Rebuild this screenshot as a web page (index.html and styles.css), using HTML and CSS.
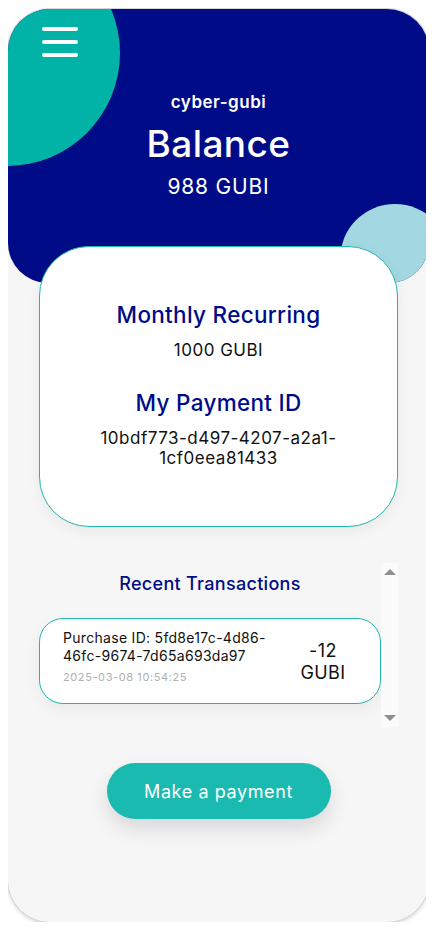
FILE: index.html
```html
<!DOCTYPE html>
<html>
<head>
<meta charset="utf-8">
<link rel="stylesheet" href="styles.css">
</head>
<body>
<div class="phone">
  <header class="header">
    <div class="circle-teal"></div>
    <div class="circle-blue"></div>
    <button class="menu" aria-label="menu"><span></span><span></span><span></span></button>
    <div class="head-text">
      <div class="app-name">cyber-gubi</div>
      <h1 class="title">Balance</h1>
      <div class="balance">988 GUBI</div>
    </div>
  </header>
  <section class="card">
    <h2 class="card-title">Monthly Recurring</h2>
    <div class="card-value">1000 GUBI</div>
    <h2 class="card-title second">My Payment ID</h2>
    <div class="card-value">10bdf773-d497-4207-a2a1-1cf0eea81433</div>
  </section>
  <section class="tx-box">
    <div class="tx-content">
      <h3 class="tx-title">Recent Transactions</h3>
      <div class="tx-item">
        <div class="tx-info">
          <div class="tx-id">Purchase ID: 5fd8e17c-4d86-46fc-9674-7d65a693da97</div>
          <div class="tx-date">2025-03-08 10:54:25</div>
        </div>
        <div class="tx-amount">-12 GUBI</div>
      </div>
    </div>
    <div class="scrollbar">
      <span class="arrow up"></span>
      <span class="arrow down"></span>
    </div>
  </section>
  <div class="actions">
    <button class="pay">Make a payment</button>
  </div>
</div>
</body>
</html>
```
FILE: styles.css
```css
* { box-sizing: border-box; }
body {
  margin: 8px;
  background: #ffffff;
  font-family: Inter, "Noto Sans", sans-serif;
}
.phone {
  width: 421px;
  height: 913px;
  margin-top: 1px;
  border-radius: 42px;
  background: #f6f6f6;
  box-shadow: 0 0 0 1px #d6d6d6, 0 2px 4px rgba(0,0,0,0.18);
  overflow: hidden;
  display: flex;
  flex-direction: column;
}
.header {
  position: relative;
  height: 274px;
  background: #000c87;
  border-radius: 0 0 40px 40px;
  overflow: hidden;
  display: flex;
  flex-direction: column;
  align-items: flex-start;
  color: #fff;
}
.circle-teal {
  position: absolute;
  width: 226px;
  height: 226px;
  left: -114px;
  top: -69px;
  border-radius: 50%;
  background: #00b3a6;
}
.circle-blue {
  position: absolute;
  width: 110px;
  height: 110px;
  left: 332px;
  top: 195px;
  border-radius: 50%;
  background: #a3d8e3;
}
.menu {
  position: relative;
  margin: 18px 0 0 34px;
  padding: 0;
  border: 0;
  background: none;
  display: flex;
  flex-direction: column;
  gap: 9px;
  width: 36px;
}
.menu span {
  display: block;
  width: 36px;
  height: 4px;
  border-radius: 2px;
  background: #fff;
}
.head-text {
  position: relative;
  align-self: stretch;
  text-align: center;
  margin-top: 35px;
}
.app-name {
  font-size: 17px;
  font-weight: 600;
  line-height: 20px;
  letter-spacing: 0.5px;
}
.title {
  margin: 11px 0 0;
  font-size: 37px;
  font-weight: 500;
  line-height: 42px;
  letter-spacing: 0.4px;
}
.balance {
  margin-top: 10px;
  font-size: 21px;
  font-weight: 400;
  line-height: 24px;
  letter-spacing: 0.8px;
}
.card {
  position: relative;
  margin: -37px auto 0;
  width: 359px;
  height: 281px;
  border: 1px solid #1db8ae;
  border-radius: 50px;
  background: #fff;
  box-shadow: 0 4px 14px rgba(0,0,0,0.06);
  padding: 54px 26px 0;
  text-align: center;
}
.card-title {
  margin: 0;
  color: #000c87;
  font-size: 22.5px;
  font-weight: 500;
  line-height: 28px;
  letter-spacing: 0.3px;
}
.card-title.second { margin-top: 29px; }
.card-value {
  margin-top: 11px;
  color: #111;
  font-size: 17px;
  line-height: 20px;
  letter-spacing: 0.5px;
}
.tx-box {
  margin: 36px auto 0;
  width: 359px;
  height: 164px;
  display: flex;
}
.tx-content {
  flex: 1;
  padding-top: 10px;
}
.tx-title {
  margin: 0;
  text-align: center;
  color: #000c87;
  font-size: 18px;
  font-weight: 500;
  line-height: 22px;
  letter-spacing: 0.3px;
}
.tx-item {
  margin-top: 23px;
  height: 86px;
  border: 1px solid #1db8ae;
  border-radius: 24px;
  background: #fff;
  box-shadow: 0 6px 16px rgba(0,0,0,0.05);
  display: flex;
  padding: 10px 0 0 23px;
}
.tx-info { width: 222px; }
.tx-id {
  font-size: 14px;
  line-height: 18px;
  letter-spacing: 0.3px;
  color: #111;
}
.tx-date {
  margin-top: 5px;
  font-size: 11px;
  line-height: 14px;
  letter-spacing: 0.6px;
  color: #b0b0b0;
}
.tx-amount {
  width: 58px;
  margin: 11px 0 0 9px;
  text-align: center;
  font-size: 18px;
  line-height: 22px;
  letter-spacing: 0.4px;
  color: #111;
}
.scrollbar {
  width: 17px;
  background: #fbfbfb;
  display: flex;
  flex-direction: column;
  justify-content: space-between;
  align-items: center;
  padding: 6px 0 6px;
}
.arrow {
  width: 0;
  height: 0;
  border-left: 6px solid transparent;
  border-right: 6px solid transparent;
}
.arrow.up { border-bottom: 6px solid #8f8f8f; }
.arrow.down { border-top: 6px solid #8f8f8f; }
.actions {
  display: flex;
  justify-content: center;
  margin-top: 36px;
}
.pay {
  width: 224px;
  height: 56px;
  border: 0;
  border-radius: 28px;
  background: #1bbab0;
  color: #fff;
  font-family: inherit;
  font-size: 18px;
  letter-spacing: 0.6px;
  box-shadow: 0 10px 20px rgba(0,0,0,0.12);
}
```
